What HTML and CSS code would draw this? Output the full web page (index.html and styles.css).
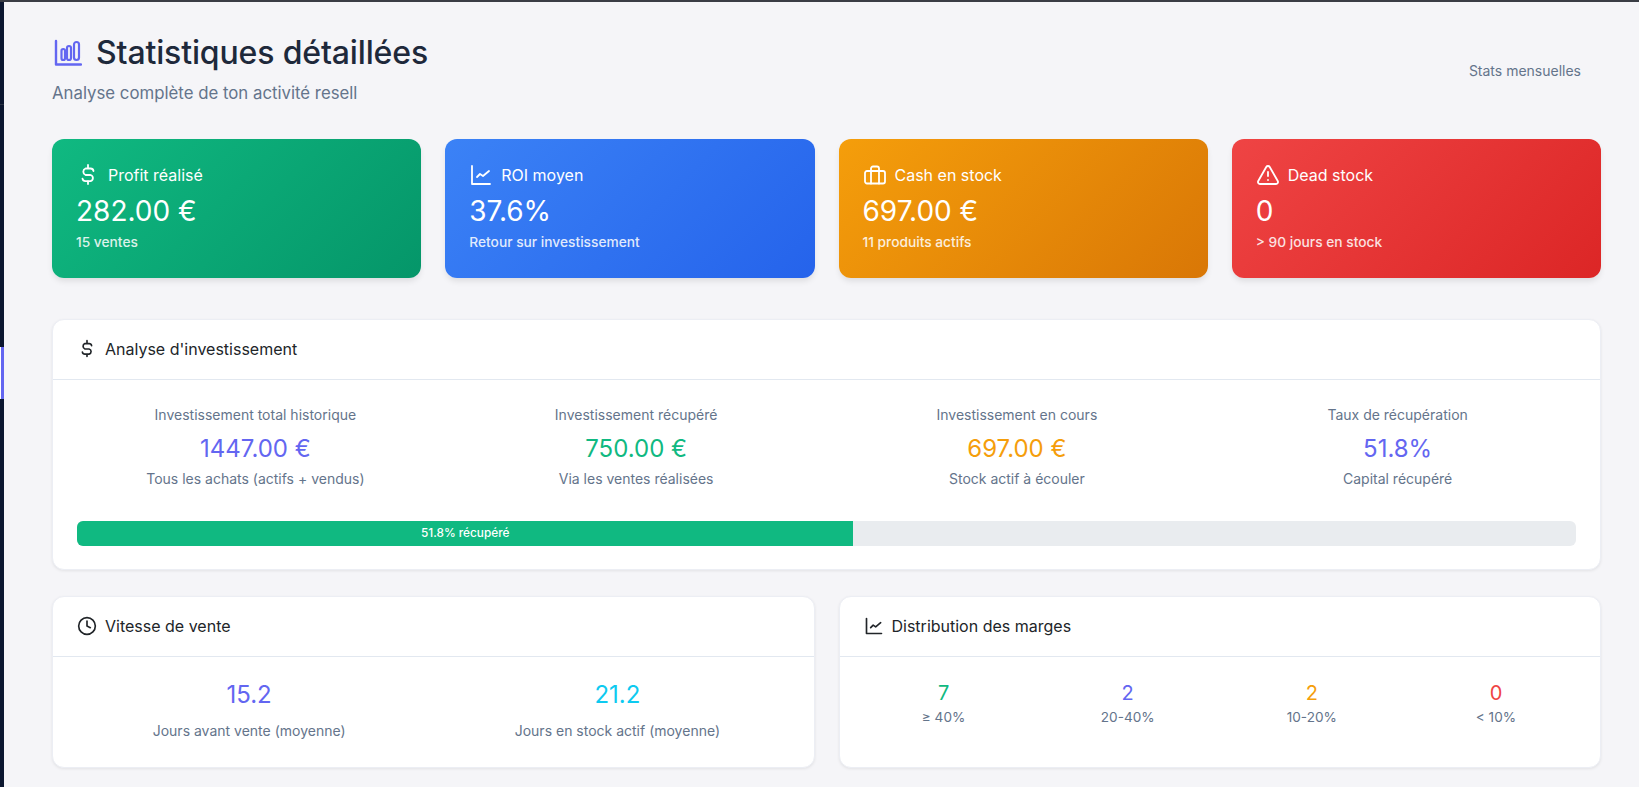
FILE: index.html
```html
<!DOCTYPE html>
<html lang="fr">
<head>
<meta charset="utf-8">
<title>Statistiques détaillées</title>
<link rel="stylesheet" href="styles.css">
</head>
<body>
<div class="app">
<aside class="rail"><span class="rail-line"></span><span class="rail-active"></span></aside>
<main class="main">
  <header class="page-head">
    <div>
      <h1 class="title">
        <svg class="title-icon" viewBox="0 0 28 28"><path d="M2 2v23.5h25"/><rect x="7.5" y="10" width="3.5" height="11" rx="1.75"/><rect x="13" y="7" width="4" height="14" rx="2"/><rect x="20" y="3" width="5" height="18" rx="2.5"/></svg>
        Statistiques détaillées
      </h1>
      <p class="subtitle">Analyse complète de ton activité resell</p>
    </div>
    <a class="head-link">Stats mensuelles</a>
  </header>

  <section class="kpis">
    <article class="kpi kpi-green">
      <div class="kpi-label">
        <svg class="icon" viewBox="0 0 24 24"><path d="M12 2v3M12 18v3M17.5 8a3 3 0 0 0-3-2.5h-5a3.5 3.5 0 0 0 0 6.5h5a3.2 3.2 0 0 1 0 6.2h-5a3 3 0 0 1-3-2.5"/></svg>
        Profit réalisé
      </div>
      <div class="kpi-value">282.00 €</div>
      <div class="kpi-note">15 ventes</div>
    </article>
    <article class="kpi kpi-blue">
      <div class="kpi-label">
        <svg class="icon" viewBox="0 0 24 24"><path d="M3 3v18h18"/><path d="M8 14l3-3 3 2 6-5"/></svg>
        ROI moyen
      </div>
      <div class="kpi-value">37.6%</div>
      <div class="kpi-note">Retour sur investissement</div>
    </article>
    <article class="kpi kpi-orange">
      <div class="kpi-label">
        <svg class="icon" viewBox="0 0 24 24"><rect x="2" y="8" width="20" height="12.5" rx="2"/><path d="M8 20.5V5.5a2 2 0 0 1 2-2h4a2 2 0 0 1 2 2v15"/></svg>
        Cash en stock
      </div>
      <div class="kpi-value">697.00 €</div>
      <div class="kpi-note">11 produits actifs</div>
    </article>
    <article class="kpi kpi-red">
      <div class="kpi-label">
        <svg class="icon" viewBox="0 0 24 24"><path d="m21.73 18-8-14a2 2 0 0 0-3.48 0l-8 14A2 2 0 0 0 4 21h16a2 2 0 0 0 1.73-3Z"/><path d="M12 9v4M12 17h.01"/></svg>
        Dead stock
      </div>
      <div class="kpi-value">0</div>
      <div class="kpi-note">&gt; 90 jours en stock</div>
    </article>
  </section>

  <section class="card card-invest">
    <h2 class="card-head">
      <svg class="icon-sm" viewBox="0 0 24 24"><path d="M12 2v3M12 18v3M17.5 8a3 3 0 0 0-3-2.5h-5a3.5 3.5 0 0 0 0 6.5h5a3.2 3.2 0 0 1 0 6.2h-5a3 3 0 0 1-3-2.5"/></svg>
      Analyse d'investissement
    </h2>
    <div class="card-body">
      <div class="invest-grid">
        <div class="stat"><div class="stat-label">Investissement total historique</div><div class="stat-value c-indigo">1447.00 €</div><div class="stat-note">Tous les achats (actifs + vendus)</div></div>
        <div class="stat"><div class="stat-label">Investissement récupéré</div><div class="stat-value c-green">750.00 €</div><div class="stat-note">Via les ventes réalisées</div></div>
        <div class="stat"><div class="stat-label">Investissement en cours</div><div class="stat-value c-orange">697.00 €</div><div class="stat-note">Stock actif à écouler</div></div>
        <div class="stat"><div class="stat-label">Taux de récupération</div><div class="stat-value c-indigo">51.8%</div><div class="stat-note">Capital récupéré</div></div>
      </div>
      <div class="progress"><div class="progress-bar" style="width:51.8%">51.8% récupéré</div></div>
    </div>
  </section>

  <div class="two-cols">
    <section class="card">
      <h2 class="card-head">
        <svg class="icon-sm" viewBox="0 0 24 24"><circle cx="12" cy="12" r="10"/><path d="M12 6v6l4 2"/></svg>
        Vitesse de vente
      </h2>
      <div class="card-body speed-grid">
        <div class="speed"><div class="stat-value c-indigo">15.2</div><div class="speed-label">Jours avant vente (moyenne)</div></div>
        <div class="speed"><div class="stat-value c-cyan">21.2</div><div class="speed-label">Jours en stock actif (moyenne)</div></div>
      </div>
    </section>
    <section class="card">
      <h2 class="card-head">
        <svg class="icon-sm" viewBox="0 0 24 24"><path d="M3 3v18h18"/><path d="M8 14l3-3 3 2 6-5"/></svg>
        Distribution des marges
      </h2>
      <div class="card-body margin-grid">
        <div class="margin"><div class="margin-value c-green">7</div><div class="margin-label">≥ 40%</div></div>
        <div class="margin"><div class="margin-value c-indigo">2</div><div class="margin-label">20-40%</div></div>
        <div class="margin"><div class="margin-value c-orange">2</div><div class="margin-label">10-20%</div></div>
        <div class="margin"><div class="margin-value c-red">0</div><div class="margin-label">&lt; 10%</div></div>
      </div>
    </section>
  </div>
</main>
</div>
</body>
</html>
```
FILE: styles.css
```css
* { box-sizing: border-box; }
html, body { margin: 0; height: 100%; overflow: hidden; }
body { font-family: Inter, "Liberation Sans", sans-serif; background: #f5f5f8; color: #1e293b; }
.app { display: flex; height: 787px; border-top: 2px solid #3a3d45; }
.rail { width: 4px; flex: none; background: #0c1730; position: relative; }
.rail-line { position: absolute; left: 0; right: 0; top: 102px; height: 1px; background: #2a3345; }
.rail-active { position: absolute; left: 0; right: 0; top: 345px; height: 52px; background: #6366f1; border-left: 1px solid #fff; }
.main { flex: 1; min-width: 0; padding: 27px 38px 0 48px; }

.page-head { display: flex; justify-content: space-between; align-items: center; height: 75px; margin-bottom: 35px; }
.title { display: flex; align-items: center; gap: 14px; margin: 0; font-size: 32px; line-height: 48px; font-weight: 500; letter-spacing: -0.15px; color: #1e293b; }
.title-icon { width: 28px; height: 28px; margin-left: 2px; color: #6366f1; fill: none; stroke: currentColor; stroke-width: 2.4; stroke-linecap: round; stroke-linejoin: round; }
.title-icon rect { stroke-width: 2.2; }
.subtitle { margin: 4px 0 0; font-size: 16.8px; line-height: 24px; color: #64748b; }
.head-link { font-size: 14px; color: #64748b; margin: 8px 20px 0 0; }

.kpis { display: grid; grid-template-columns: repeat(4, 1fr); gap: 24px; margin-bottom: 41px; }
.kpi { height: 139px; border-radius: 12px; padding: 24px; color: #fff; box-shadow: 0 4px 6px -1px rgba(0,0,0,.1); }
.kpi-green { background: linear-gradient(135deg, #10b981, #059669); }
.kpi-blue { background: linear-gradient(135deg, #3b82f6, #2563eb); }
.kpi-orange { background: linear-gradient(135deg, #f59e0b, #d97706); }
.kpi-red { background: linear-gradient(135deg, #ef4444, #dc2626); }
.kpi-label { display: flex; align-items: center; gap: 8px; font-size: 16px; line-height: 24px; height: 24px; }
.icon { width: 24px; height: 24px; flex: none; fill: none; stroke: currentColor; stroke-width: 1.8; stroke-linecap: round; stroke-linejoin: round; }
.kpi-value { font-size: 28px; line-height: 34px; margin-top: 7px; }
.kpi-note { font-size: 13.75px; line-height: 20px; margin-top: 4px; opacity: .85; font-weight: 500; }

.card { background: #fff; border-radius: 12px; border: 1px solid #eceef4; box-shadow: 0 1px 3px rgba(0,0,0,.08); overflow: hidden; }
.card-invest { height: 251px; margin-bottom: 26px; }
.card-head { display: flex; align-items: center; gap: 8px; height: 60px; padding: 0 24px 2px; margin: 0; font-size: 16px; font-weight: 400; color: #212529; border-bottom: 1px solid #e2e8f0; }
.icon-sm { width: 20px; height: 20px; flex: none; color: #212529; fill: none; stroke: currentColor; stroke-width: 2; stroke-linecap: round; stroke-linejoin: round; }
.card-body { padding: 24px; }

.invest-grid { display: grid; grid-template-columns: repeat(4, 1fr); gap: 24px; margin-bottom: 33px; }
.stat { text-align: center; height: 84px; }
.stat-label, .stat-note { font-size: 14px; line-height: 21px; color: #64748b; }
.stat-value { font-size: 24px; line-height: 29px; margin: 9px 0 8px; }
.stat-note { margin-top: -3px; }
.progress { height: 25px; background: #e9ecef; border-radius: 6px; overflow: hidden; }
.progress-bar { height: 100%; background: #10b981; color: #fff; font-size: 11.8px; font-weight: 500; line-height: 25px; text-align: center; }

.c-indigo { color: #6366f1; }
.c-green { color: #10b981; }
.c-orange { color: #f59e0b; }
.c-cyan { color: #0dcaf0; }
.c-red { color: #ef4444; }

.two-cols { display: grid; grid-template-columns: 1fr 1fr; gap: 24px; }
.two-cols .card { height: 172px; }
.speed-grid { display: grid; grid-template-columns: 1fr 1fr; gap: 24px; }
.speed { text-align: center; }
.speed .stat-value { margin: -1px 0 11px; }
.speed-label { font-size: 14px; line-height: 21px; color: #64748b; }
.margin-grid { display: grid; grid-template-columns: repeat(4, 1fr); gap: 24px; }
.margin { text-align: center; }
.margin-value { font-size: 20px; line-height: 24px; }
.margin-label { font-size: 13.6px; line-height: 21px; color: #64748b; margin-top: 2px; }
```
